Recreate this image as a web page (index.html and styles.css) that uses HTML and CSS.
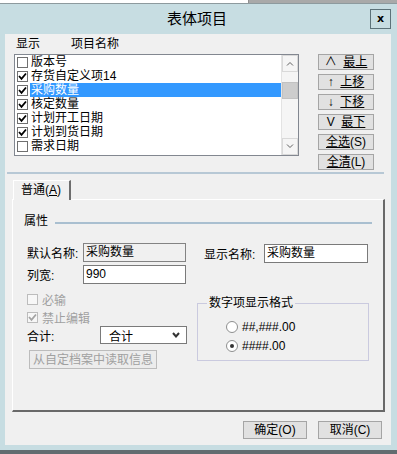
FILE: index.html
```html
<!DOCTYPE html>
<html>
<head>
  <meta charset="utf-8">
  <title>表体项目</title>
  <link rel="stylesheet" href="styles.css">
</head>
<body>
  <div class="top-edge">
    <div class="edge-white"></div>
    <div class="edge-grey"></div>
  </div>

  <div class="titlebar">
    <span></span>
    <span class="title">表体项目</span>
    <span class="close-btn">x</span>
  </div>

  <div class="client">
    <div class="list-area">
      <div class="list-col">
        <div class="list-head"><span class="head-show">显示</span><span>项目名称</span></div>
        <div class="listbox">
          <div class="items">
            <div class="item"><span class="cb"></span><span class="item-text">版本号</span></div>
            <div class="item"><span class="cb"><svg width="9" height="9" viewBox="0 0 9 9"><polyline points="1,4 3.5,6.8 8,1.5" fill="none" stroke="#000" stroke-width="1.8"/></svg></span><span class="item-text">存货自定义项14</span></div>
            <div class="item sel"><span class="cb"><svg width="9" height="9" viewBox="0 0 9 9"><polyline points="1,4 3.5,6.8 8,1.5" fill="none" stroke="#000" stroke-width="1.8"/></svg></span><span class="item-text">采购数量</span></div>
            <div class="item"><span class="cb"><svg width="9" height="9" viewBox="0 0 9 9"><polyline points="1,4 3.5,6.8 8,1.5" fill="none" stroke="#000" stroke-width="1.8"/></svg></span><span class="item-text">核定数量</span></div>
            <div class="item"><span class="cb"><svg width="9" height="9" viewBox="0 0 9 9"><polyline points="1,4 3.5,6.8 8,1.5" fill="none" stroke="#000" stroke-width="1.8"/></svg></span><span class="item-text">计划开工日期</span></div>
            <div class="item"><span class="cb"><svg width="9" height="9" viewBox="0 0 9 9"><polyline points="1,4 3.5,6.8 8,1.5" fill="none" stroke="#000" stroke-width="1.8"/></svg></span><span class="item-text">计划到货日期</span></div>
            <div class="item"><span class="cb"></span><span class="item-text">需求日期</span></div>
          </div>
          <div class="scrollbar">
            <div class="sb-btn"><svg width="8" height="5" viewBox="0 0 8 5"><polyline points="1,4.5 4,1.5 7,4.5" fill="none" stroke="#606060" stroke-width="1"/></svg></div>
            <div class="sb-track"><div class="sb-thumb"></div></div>
            <div class="sb-btn"><svg width="8" height="5" viewBox="0 0 8 5"><polyline points="1,0.5 4,3.5 7,0.5" fill="none" stroke="#606060" stroke-width="1"/></svg></div>
          </div>
        </div>
      </div>

      <div class="move-btns">
        <div class="btn">∧&nbsp; <u>最上</u></div>
        <div class="btn">↑&nbsp; <u>上移</u></div>
        <div class="btn">↓&nbsp; <u>下移</u></div>
        <div class="btn">V&nbsp; <u>最下</u></div>
        <div class="btn"><u>全选</u>(S)</div>
        <div class="btn"><u>全清</u>(L)</div>
      </div>
    </div>

    <div class="sep"></div>

    <div class="tabs">
      <div class="tab">普通(<u>A</u>)</div>
    </div>

    <div class="panel">
      <div class="group-head"><span>属性</span><span class="group-line"></span></div>

      <div class="fields">
        <div class="left-col">
          <div class="row">
            <span class="row-label">默认名称:</span>
            <span class="textbox disabled">采购数量</span>
          </div>
          <div class="row row-2">
            <span class="row-label">列宽:</span>
            <span class="textbox">990</span>
          </div>
          <div class="check-row first">
            <span class="cb off"></span><span class="muted">必输</span>
          </div>
          <div class="check-row">
            <span class="cb off"><svg width="9" height="9" viewBox="0 0 9 9"><polyline points="1,4 3.5,6.8 8,1.5" fill="none" stroke="#a3a3a3" stroke-width="1.8"/></svg></span><span class="muted">禁止编辑</span>
          </div>
          <div class="row row-sum">
            <span class="sum-label">合计:</span>
            <span class="select">合计<svg width="8" height="6" viewBox="0 0 8 6"><polyline points="1,1 4,4.5 7,1" fill="none" stroke="#333" stroke-width="2"/></svg></span>
          </div>
          <div class="btn btn-disabled">从自定档案中读取信息</div>
        </div>

        <div class="right-col">
          <div class="row row-show">
            <span class="show-label">显示名称:</span>
            <span class="textbox wide">采购数量</span>
          </div>
          <fieldset class="num-format">
            <legend>数字项显示格式</legend>
            <div class="radio-row"><span class="radio"></span><span>##,###.00</span></div>
            <div class="radio-row"><span class="radio on"></span><span>####.00</span></div>
          </fieldset>
        </div>
      </div>
    </div>

    <div class="footer">
      <div class="btn footer-btn">确定(O)</div>
      <div class="btn footer-btn">取消(C)</div>
    </div>
  </div>

  <div class="bottom-edge"></div>
</body>
</html>
```

FILE: styles.css
```css
body {
  margin: 0;
  width: 397px;
  height: 454px;
  overflow: hidden;
  background-color: #c7dde2; /* window frame */
  font-family: "Liberation Sans", "Noto Sans CJK SC", sans-serif;
  font-size: 12px;
  color: #000;
  display: flex;
  flex-direction: column;
}
body > div, .client > div {
  flex-shrink: 0;
}
u {
  text-decoration: underline;
  text-underline-offset: 1px;
}

/* strip of the window behind */
.top-edge {
  display: flex;
  height: 3px;
  border-bottom: 1px solid #8d9a9e;
}
.edge-white {
  width: 248px;
  background-color: #fff;
}
.edge-grey {
  flex: 1;
  background-color: #a9a9a9;
  border-left: 1px solid #8f8f8f;
}

.titlebar {
  height: 30px;
  display: grid;
  grid-template-columns: 1fr auto 1fr;
  align-items: center;
}
.title {
  font-size: 15px;
  line-height: 30px;
  margin-left: -3px;
}
.close-btn {
  justify-self: end;
  margin-right: 6px;
  width: 21px;
  height: 20px;
  box-sizing: border-box;
  border: 1px solid #5c7279;
  display: flex;
  align-items: center;
  justify-content: center;
  font: bold 11px "DejaVu Sans", sans-serif;
  padding-bottom: 2px;
}

.client {
  margin: 0 6px 0 5px;
  height: 411px;
  background-color: #f0f0f0;
  display: flex;
  flex-direction: column;
}

/* list + move buttons */
.list-area {
  display: flex;
  align-items: flex-start;
  padding-left: 9px;
}
.list-col {
  width: 285px;
}
.list-head {
  height: 20px;
  line-height: 20px;
  padding-left: 2px;
  display: flex;
}
.head-show {
  width: 55px;
}
.listbox {
  height: 102px;
  box-sizing: border-box;
  border: 1px solid #828790;
  background-color: #fff;
  display: flex;
}
.items {
  flex: 1;
}
.item {
  height: 14px;
  line-height: 14px;
  display: flex;
  align-items: center;
  padding-left: 2px;
}
.cb {
  width: 11px;
  height: 11px;
  box-sizing: border-box;
  border: 1px solid #707070;
  background-color: #fff;
  display: flex;
  align-items: center;
  justify-content: center;
  margin-right: 2px;
}
.cb.off {
  border-color: #bcbcbc;
  background-color: #f7f7f7;
}
.item-text {
  flex: 1;
  height: 14px;
  padding-left: 1px;
}
.item.sel .item-text {
  background-color: #3399ff;
  color: #fff;
}
.scrollbar {
  width: 17px;
  box-sizing: border-box;
  border-left: 1px solid #e3e3e3;
  background-color: #f5f5f5;
  display: flex;
  flex-direction: column;
}
.sb-btn {
  height: 17px;
  box-sizing: border-box;
  border: 1px solid #d9d9d9;
  display: flex;
  align-items: center;
  justify-content: center;
}
.sb-track {
  flex: 1;
}
.sb-thumb {
  margin-top: 10px;
  height: 17px;
  background-color: #cdcdcd;
  border: 1px solid #c2c2c2;
  box-sizing: border-box;
}

.move-btns {
  width: 56px;
  margin-left: 19px;
  margin-top: 20px;
  margin-bottom: -14px; /* hangs lower than the list */
  display: flex;
  flex-direction: column;
  gap: 4px;
}
.btn {
  height: 16px;
  box-sizing: border-box;
  border: 1px solid #a5a5a5;
  background-color: #e1e1e1;
  display: flex;
  align-items: center;
  justify-content: center;
  line-height: 14px;
  white-space: pre;
}

.sep {
  margin: 16px 7px 0 2px;
  border-top: 2px solid #b7c8d5;
}

/* tab page */
.tabs {
  margin-top: 6px;
  padding-left: 8px;
  display: flex;
  position: relative;
  z-index: 1;
}
.tab {
  width: 58px;
  height: 20px;
  box-sizing: border-box;
  border-left: 1px solid #fff;
  border-top: 1px solid #fff;
  border-right: 2px solid #6d6d6d;
  background-color: #f0f0f0;
  padding-left: 7px;
  line-height: 19px;
  margin-bottom: -1px;
}
.panel {
  margin-left: 7px;
  width: 373px;
  height: 213px;
  box-sizing: border-box;
  border-top: 1px solid #fff;
  border-left: 1px solid #fff;
  border-right: 2px solid #696969;
  border-bottom: 2px solid #696969;
}
.group-head {
  display: flex;
  align-items: center;
  height: 18px;
  margin-top: 10px;
  padding-left: 11px;
}
.group-line {
  flex: 1;
  height: 2px;
  background-color: #a9bfd0;
  margin: 8px 11px 0 7px;
}

.fields {
  display: flex;
  margin-top: 15px;
  padding-left: 14px;
}
.left-col {
  width: 162px;
  display: flex;
  flex-direction: column;
}
.row {
  display: flex;
  align-items: center;
  height: 19px;
}
.row-2 {
  margin-top: 3px;
}
.row-label {
  width: 56px;
}
.textbox {
  width: 103px;
  height: 19px;
  box-sizing: border-box;
  border: 1px solid #7a7a7a;
  background-color: #fff;
  padding-left: 2px;
  line-height: 17px;
}
.textbox.disabled {
  background-color: #f0f0f0;
  border-color: #838383;
}
.textbox.wide {
  width: 104px;
}
.check-row {
  display: flex;
  align-items: center;
  height: 16px;
  margin-top: 2px;
}
.check-row.first {
  margin-top: 7px;
}
.check-row .cb {
  margin-right: 4px;
}
.muted {
  color: #a0a0a0;
}
.row-sum {
  height: 18px;
  margin-top: 1px;
}
.sum-label {
  width: 73px;
}
.select {
  width: 87px;
  height: 18px;
  box-sizing: border-box;
  border: 1px solid #7a7a7a;
  background-color: #fff;
  display: flex;
  align-items: center;
  justify-content: space-between;
  padding: 0 6px 0 8px;
}
.btn-disabled {
  width: 128px;
  height: 19px;
  margin: 6px 0 0 2px;
  color: #a0a0a0;
  background-color: #ececec;
  border-color: #bcbcbc;
}

.right-col {
  margin-left: 8px;
}
.row-show {
  margin-top: 1px;
  padding-left: 7px;
}
.show-label {
  width: 60px;
}
.num-format {
  width: 172px;
  box-sizing: border-box;
  margin: 33px 0 0 0;
  padding: 0 0 5px 9px;
  border: 1px solid #cacadf;
}
.num-format legend {
  padding: 0 2px;
  line-height: 14px;
}
.radio-row {
  display: flex;
  align-items: center;
  height: 19px;
  padding-left: 19px;
}
.radio-row:first-of-type {
  margin-top: 7px;
}
.radio {
  width: 12px;
  height: 12px;
  box-sizing: border-box;
  border-radius: 50%;
  border: 1px solid #8e8f8f;
  background-color: #fff;
  display: flex;
  align-items: center;
  justify-content: center;
  margin-right: 4px;
}
.radio.on::after {
  content: "";
  width: 4px;
  height: 4px;
  border-radius: 50%;
  background-color: #333;
}

.footer {
  display: flex;
  justify-content: flex-end;
  gap: 11px;
  padding-right: 9px;
  margin-top: 9px;
}
.footer-btn {
  width: 64px;
  height: 18px;
}

.bottom-edge {
  margin-top: 5px;
  height: 4px;
  background-color: #626c70;
}
```
